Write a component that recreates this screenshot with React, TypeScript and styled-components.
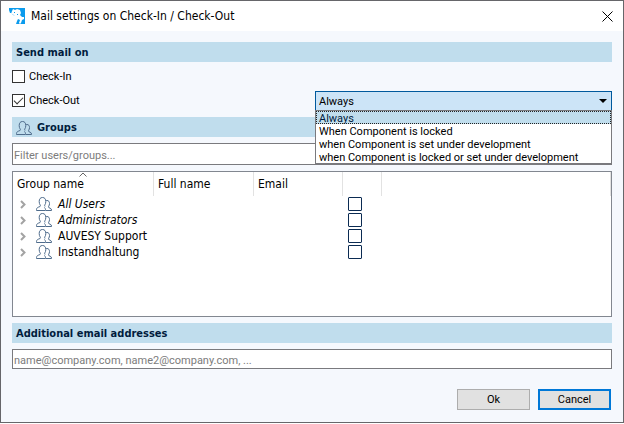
import React, { useState } from "react";
import styled, { createGlobalStyle, css } from "styled-components";

const viewFont = `"DejaVu Sans Condensed", "DejaVu Sans", sans-serif`;
const controlFont = `Roboto, "Liberation Sans", sans-serif`;

const GlobalStyle = createGlobalStyle`
  *, *::before, *::after { box-sizing: border-box; }
  body {
    margin: 0;
    background: #fff;
    color: #000;
    font: 11px/16px ${controlFont};
  }
  input, button, select { font: inherit; color: inherit; margin: 0; }
`;

const Dialog = styled.main`
  display: flex;
  flex-direction: column;
  min-height: calc(100vh - 1px);
  border: 1px solid #66666a;
  background: #f5f8fd;
`;

const TitleBar = styled.header`
  display: flex;
  align-items: center;
  height: 30px;
  padding: 0 10px 0 8px;
  background: #fff;
`;

const Title = styled.h1`
  flex: 1;
  margin: 0 0 0 5px;
  font: 400 12px/16px ${viewFont};
`;

const CloseButton = styled.button`
  display: flex;
  padding: 0;
  border: 0;
  background: none;
`;

const Content = styled.div`
  display: flex;
  flex: 1;
  flex-direction: column;
  padding: 11px 11px 12px;
`;

const Band = styled.h2`
  display: flex;
  align-items: center;
  gap: 5px;
  height: 20px;
  margin: 0;
  padding: 1px 4px 0;
  background: #c0dded;
  color: #001c3d;
  font: 700 11px/16px ${viewFont};
`;

const OptionRow = styled.div`
  display: flex;
  align-items: center;
  justify-content: space-between;
  height: 19px;
`;

const Options = styled.div`
  display: flex;
  flex-direction: column;
  gap: 5px;
  padding: 5px 0 7px;
`;

const CheckLabel = styled.label`
  display: flex;
  align-items: center;
  gap: 4px;
  line-height: 19px;
`;

const CheckBox = styled.input.attrs({ type: "checkbox" })<{ $inTable?: boolean }>`
  appearance: none;
  display: flex;
  align-items: center;
  justify-content: center;
  width: ${(p) => (p.$inTable ? 14 : 13)}px;
  height: ${(p) => (p.$inTable ? 14 : 13)}px;
  border: 1px solid ${(p) => (p.$inTable ? "#0b2b52" : "#333")};
  border-radius: ${(p) => (p.$inTable ? 1 : 0)}px;
  background: #fff;

  &:checked::after {
    content: "";
    width: 9px;
    height: 5px;
    margin-bottom: 3px;
    border: solid #333;
    border-width: 0 0 1px 1px;
    transform: rotate(-45deg);
  }
`;

const Combo = styled.div`
  position: relative;
  width: 297px;
`;

const ComboSelect = styled.select`
  appearance: none;
  display: block;
  width: 100%;
  height: 19px;
  padding: 2px 20px 0 3px;
  border: 1px solid #00599d;
  border-bottom: 0;
  border-radius: 0;
  outline: 0;
  background: #cce4f7;
`;

const ComboArrow = styled.svg`
  position: absolute;
  top: 8px;
  right: 5px;
  pointer-events: none;
`;

const Popup = styled.ul`
  position: absolute;
  z-index: 1;
  top: 100%;
  left: 0;
  right: 0;
  margin: 0;
  padding: 0;
  border: 1px solid #7a7a7e;
  background: #fff;
  list-style: none;
`;

const PopupItem = styled.li<{ $active: boolean }>`
  height: 13px;
  padding: 0 3px;
  line-height: 15px;
  white-space: nowrap;
  ${(p) =>
    p.$active &&
    css`
      outline: 1px dotted #222;
      outline-offset: -1px;
      background: #c0dded;
      color: #001c3d;
    `}
`;

const TextBox = styled.input<{ $tall?: boolean }>`
  width: 100%;
  height: ${(p) => (p.$tall ? 22 : 20)}px;
  margin: 6px 0;
  padding: 2px 1px 0;
  border: 1px solid #7a7a7e;
  border-radius: 0;
  background: #fff;
  &::placeholder { color: #7c7c7c; opacity: 1; }
`;

const GroupPanel = styled.div`
  flex: 1;
  margin-bottom: 6px;
  border: 1px solid #828790;
  background: #fff;
`;

const GroupTable = styled.table`
  width: 100%;
  border-collapse: separate;
  border-spacing: 0;
  table-layout: fixed;
  font: 12px/16px ${viewFont};
`;

const HeadCell = styled.th<{ $width?: number }>`
  position: relative;
  width: ${(p) => (p.$width ? `${p.$width}px` : "auto")};
  height: 24px;
  padding: 0 4px;
  border-right: 1px solid #e2e2e2;
  font-weight: 400;
  text-align: left;
`;

const SortMark = styled.svg`
  position: absolute;
  top: 0;
  left: calc(50% - 4px);
`;

const Cell = styled.td<{ $check?: boolean }>`
  height: 16px;
  padding: 0 0 0 ${(p) => (p.$check ? 5 : 0)}px;
`;

const GroupName = styled.div<{ $italic: boolean }>`
  display: flex;
  align-items: center;
  height: 16px;
  padding-left: 7px;
  font-style: ${(p) => (p.$italic ? "italic" : "normal")};
  white-space: nowrap;
`;

const Expander = styled.button`
  display: flex;
  width: 16px;
  padding: 0;
  border: 0;
  background: none;
`;

const NameText = styled.span`
  margin-left: 6px;
`;

const Actions = styled.footer`
  display: flex;
  justify-content: flex-end;
  gap: 8px;
  margin-top: 14px;
  padding-right: 1px;
`;

const ActionButton = styled.button<{ $primary?: boolean }>`
  width: 73px;
  height: 21px;
  padding: 0;
  border: ${(p) => (p.$primary ? "2px solid #0078d7" : "1px solid #adadad")};
  background: #e1e1e1;
  line-height: 16px;
`;

const AppLogo = () => (
  <svg width="17" height="16" viewBox="0 0 17 16" aria-hidden="true">
    <path fill="#0b9bed" d="M0 0h16v16H7l1-3-2-2 1-3-3-1-2-2H1L0 2z" />
    <path
      fill="#fff"
      d="M3 3l1-2 2 1 2-1 3 1 1 3-1 2 2 2 2 0 0 2-2 1-1 3-1 1-1-1 1-3-2-1-1 2-2 1-1-2 1-3-1-2-3-1z"
    />
    <path fill="#0b9bed" d="M5 4h1v1H5zM8 6h1v1H8z" />
  </svg>
);

const UsersIcon = () => (
  <svg width="16" height="16" viewBox="0 -1 16 16" fill="none" stroke="#4f6c8c" aria-hidden="true">
    <path d="M9 13.500H.5v-1c0-1.200.7-1.800 1.800-2.300L4 9.500c.6-.3.500-1 .1-1.600C3.500 7 3.200 6 3.200 4.500c0-2.500 1.100-4 3.300-4s3.300 1.500 3.300 4c0 1.500-.4 2.500-.9 3.300-.4.700-.4 1.400.1 1.700" />
    <path d="M9.800 3.700c.3-.2.700-.2 1.200-.2 1.600 0 2.500 1.200 2.500 3 0 1.200-.3 2-.8 2.700-.3.600-.3 1.200.2 1.500l1.200.5c.9.400 1.400.9 1.400 1.800v.5h-6v-1c0-.8-.3-1.500-1.200-2" />
  </svg>
);

const strategies = [
  "Always",
  "When Component is locked",
  "when Component is set under development",
  "when Component is locked or set under development",
];

const groups = [
  { name: "All Users", italic: true },
  { name: "Administrators", italic: true },
  { name: "AUVESY Support", italic: false },
  { name: "Instandhaltung", italic: false },
];

export default function App() {
  const [strategy, setStrategy] = useState(strategies[0]);

  return (
    <>
      <GlobalStyle />
      <Dialog>
        <TitleBar>
          <AppLogo />
          <Title>Mail settings on Check-In / Check-Out</Title>
          <CloseButton type="button" aria-label="Close">
            <svg width="11" height="11" viewBox="0 0 11 11" stroke="#000" aria-hidden="true">
              <path d="M.5 .5l10 10M10.500 .5l-10 10" />
            </svg>
          </CloseButton>
        </TitleBar>
        <Content>
          <Band>Send mail on</Band>
          <Options>
            <OptionRow>
              <CheckLabel>
                <CheckBox />
                Check-In
              </CheckLabel>
            </OptionRow>
            <OptionRow>
              <CheckLabel>
                <CheckBox defaultChecked />
                Check-Out
              </CheckLabel>
              <Combo>
                <ComboSelect
                  aria-label="Check-Out condition"
                  value={strategy}
                  onChange={(e) => setStrategy(e.target.value)}
                >
                  {strategies.map((s) => (
                    <option key={s}>{s}</option>
                  ))}
                </ComboSelect>
                <ComboArrow width="8" height="4" viewBox="0 0 8 4" aria-hidden="true">
                  <path d="M0 0h8L4 4z" />
                </ComboArrow>
                <Popup role="listbox" aria-label="Check-Out condition">
                  {strategies.map((s) => (
                    <PopupItem
                      key={s}
                      role="option"
                      aria-selected={s === strategy}
                      $active={s === strategy}
                      onClick={() => setStrategy(s)}
                    >
                      {s}
                    </PopupItem>
                  ))}
                </Popup>
              </Combo>
            </OptionRow>
          </Options>
          <Band>
            <UsersIcon />
            Groups
          </Band>
          <TextBox $tall type="text" aria-label="Filter users/groups" placeholder="Filter users/groups..." />
          <GroupPanel>
            <GroupTable>
              <thead>
                <tr>
                  <HeadCell $width={141}>
                    Group name
                    <SortMark width="8" height="5" viewBox="0 0 8 5" fill="none" stroke="#666" aria-hidden="true">
                      <path d="M.5 4.500L4 1l3.500 3.500" />
                    </SortMark>
                  </HeadCell>
                  <HeadCell $width={100}>Full name</HeadCell>
                  <HeadCell $width={89}>Email</HeadCell>
                  <HeadCell $width={39} aria-label="Selected" />
                  <HeadCell aria-hidden="true" />
                </tr>
              </thead>
              <tbody>
                {groups.map((g) => (
                  <tr key={g.name}>
                    <Cell>
                      <GroupName $italic={g.italic}>
                        <Expander type="button" aria-label={`Expand ${g.name}`}>
                          <svg width="6" height="9" viewBox="0 0 6 9" fill="none" stroke="#a3a3a3" strokeWidth="2" aria-hidden="true">
                            <path d="M1 1l3.500 3.500L1 8" />
                          </svg>
                        </Expander>
                        <UsersIcon />
                        <NameText>{g.name}</NameText>
                      </GroupName>
                    </Cell>
                    <Cell />
                    <Cell />
                    <Cell $check>
                      <CheckBox $inTable aria-label={`Select ${g.name}`} />
                    </Cell>
                    <Cell />
                  </tr>
                ))}
              </tbody>
            </GroupTable>
          </GroupPanel>
          <Band>Additional email addresses</Band>
          <TextBox
            type="text"
            aria-label="Additional email addresses"
            placeholder="name@company.com, name2@company.com, ..."
          />
          <Actions>
            <ActionButton type="button">Ok</ActionButton>
            <ActionButton type="button" $primary>
              Cancel
            </ActionButton>
          </Actions>
        </Content>
      </Dialog>
    </>
  );
}
